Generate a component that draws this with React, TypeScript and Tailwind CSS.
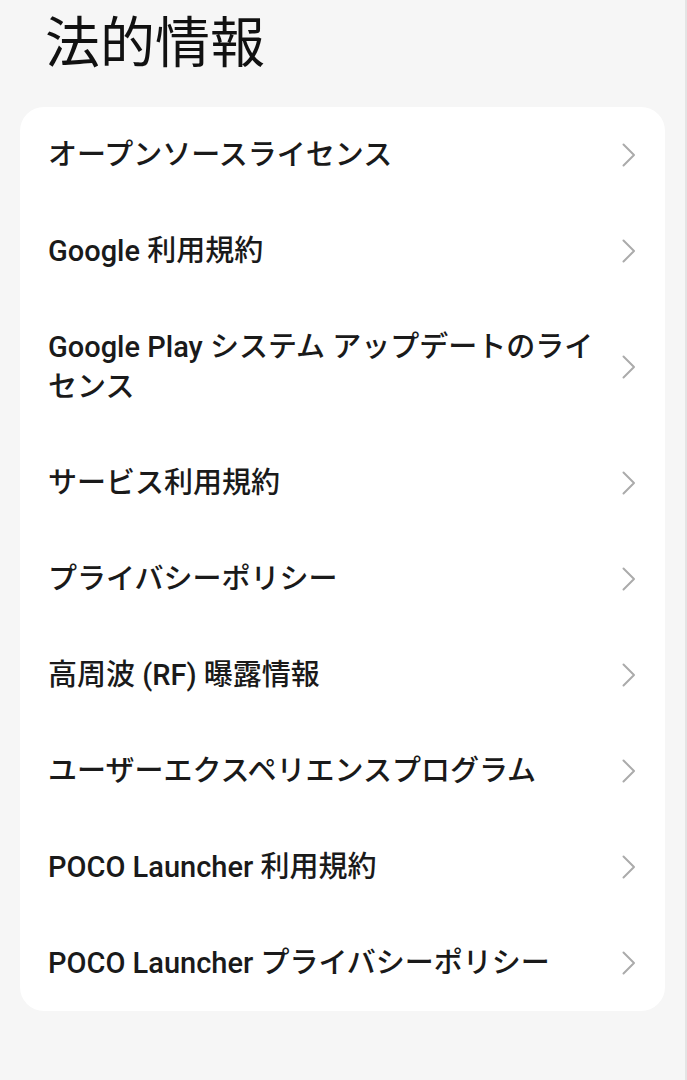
import React from "react";

const items: string[] = [
  "オープンソースライセンス",
  "Google 利用規約",
  "Google Play システム アップデートのライセンス",
  "サービス利用規約",
  "プライバシーポリシー",
  "高周波 (RF) 曝露情報",
  "ユーザーエクスペリエンスプログラム",
  "POCO Launcher 利用規約",
  "POCO Launcher プライバシーポリシー",
];

function Chevron() {
  return (
    <svg width="14" height="24" viewBox="0 0 14 24" fill="none" className="shrink-0">
      <path d="M1.5 1.5 L12 12 L1.5 22.5" stroke="#ababab" strokeWidth="2" strokeLinecap="round" strokeLinejoin="round" />
    </svg>
  );
}

export default function App() {
  return (
    <div
      className="min-h-[1080px] w-full bg-[#f6f6f6] border-r-2 border-[#e4e4e4]"
      style={{ fontFamily: 'Roboto, "Noto Sans CJK JP", sans-serif' }}
    >
      <div className="pt-[11px] pl-[45px] pb-[32px]">
        <h1 className="text-[55px] leading-[64px] font-normal text-[#111]">法的情報</h1>
      </div>
      <div className="mx-[20px] bg-white rounded-[24px] overflow-hidden">
        {items.map((t) => (
          <div key={t} className="flex items-center pl-[28px] pr-[29px] py-[28px] gap-[24px]">
            <div className="flex-1 text-[29px] leading-[40px] font-medium text-[#1a1a1a]">{t}</div>
            <Chevron />
          </div>
        ))}
      </div>
    </div>
  );
}
